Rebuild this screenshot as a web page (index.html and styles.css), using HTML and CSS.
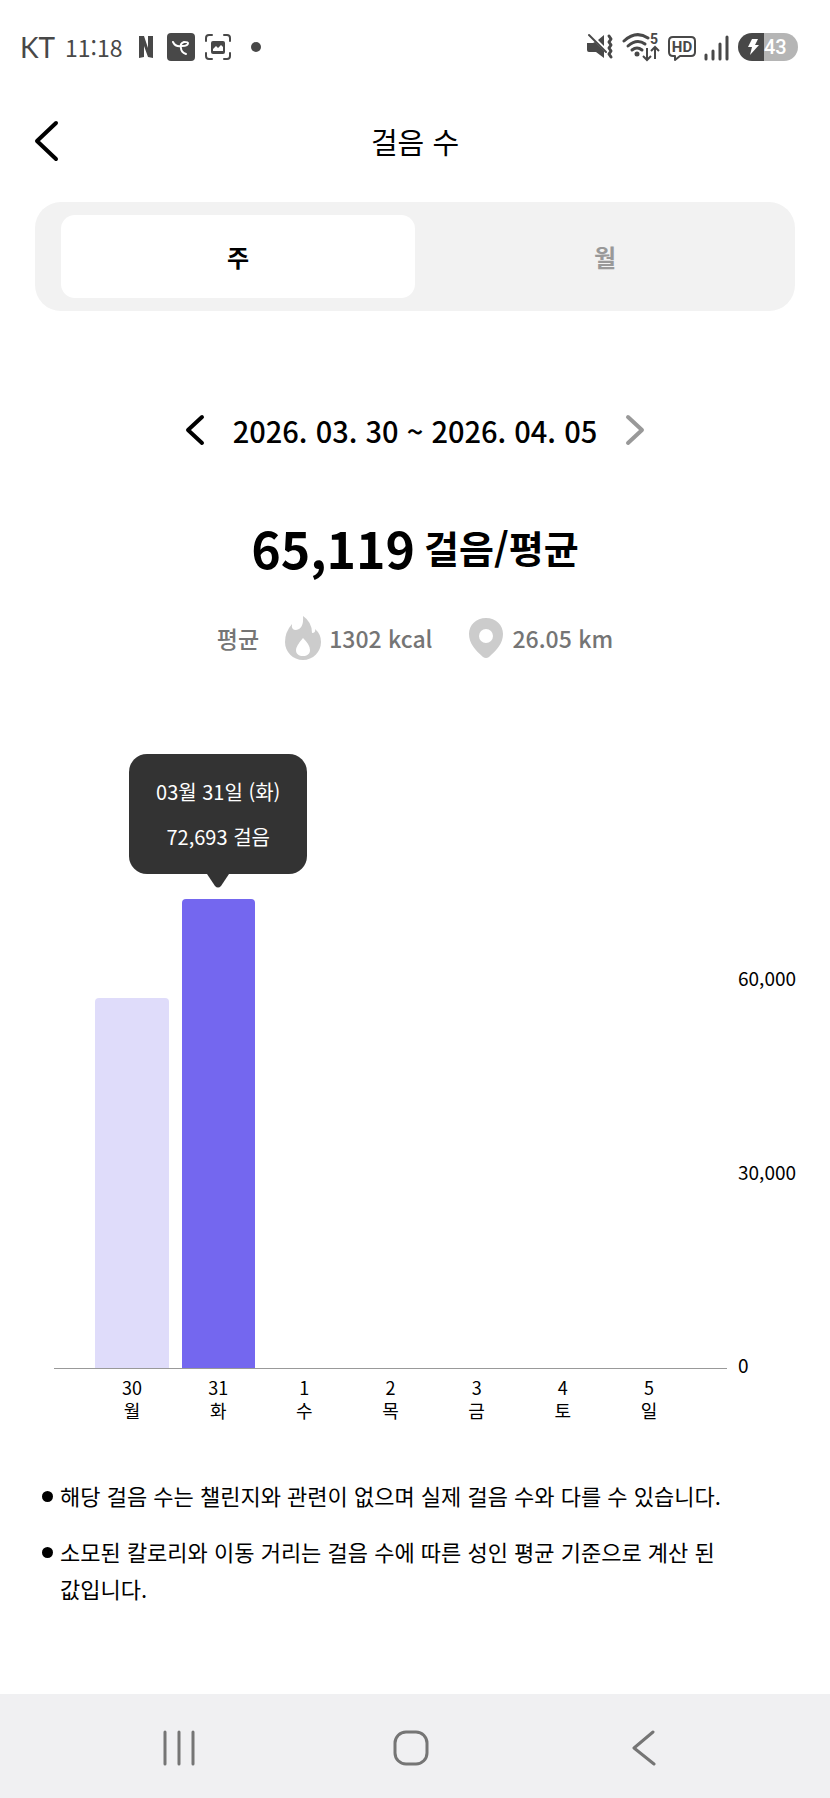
FILE: index.html
```html
<!DOCTYPE html>
<html lang="ko">
<head>
<meta charset="utf-8">
<meta name="viewport" content="width=device-width, initial-scale=1">
<title>걸음 수</title>
<link rel="stylesheet" href="styles.css">
</head>
<body>
<div class="status-bar">
  <div class="status-left">
    <span class="carrier">KT</span>
    <span class="clock">11:18</span>
    <svg class="app-n" width="14" height="24" viewBox="0 0 14 24" aria-hidden="true"><path d="M0 1h5l4 12V1h5v22l-5-1-4-11v11l-5 1z" fill="#484848"/></svg>
    <svg class="app-box" width="28" height="28" viewBox="0 0 28 28" aria-hidden="true"><rect width="28" height="28" rx="4" fill="#484848"/><path d="M6 9c2 4 5 5 9 4 4 0 6-1 6-3 0-1-2-1-4-1-3 1-4 3-3 6 0 3 2 5 5 6" fill="none" stroke="#fff" stroke-width="2" stroke-linecap="round"/></svg>
    <svg class="capture" width="28" height="28" viewBox="0 0 28 28" aria-hidden="true"><path d="M2 8V5q0-3 3-3h3M20 2h3q3 0 3 3v3M26 20v3q0 3-3 3h-3M8 26H5q-3 0-3-3v-3" fill="none" stroke="#484848" stroke-width="2" stroke-linecap="round"/><rect x="7" y="8" width="14" height="13" rx="2" fill="#484848"/><path d="M9 18v-2l3-3 2 2 3-3 2 2v4z" fill="#fff"/></svg>
    <span class="more-dot"></span>
  </div>
  <div class="status-right">
    <svg width="28" height="28" viewBox="0 0 28 28" aria-hidden="true"><path d="M1 10h6l2-1 9 9v7l-8-6H3q-2 0-2-2zM12 7l6-5v11z" fill="#484848"/><path d="M3 2l17 17" stroke="#484848" stroke-width="2" stroke-linecap="round"/><path d="M23 3l2 3-2 3 2 3-2 3 2 3-2 3 2 3" fill="none" stroke="#484848" stroke-width="3" stroke-linejoin="round" stroke-linecap="round"/></svg>
    <svg width="38" height="30" viewBox="0 0 38 30" aria-hidden="true"><g fill="none" stroke="#484848" stroke-width="3" stroke-linecap="round"><path d="M2 9Q14-2 26 6"/><path d="M6 14q9-8 17-2"/><path d="M10 18q5-4 10 0"/></g><circle cx="15" cy="22" r="2.500" fill="#484848"/><path d="M25 16v11M21 24l4 4 4-4M33 27V16M29 19l4-4 4 4" fill="none" stroke="#484848" stroke-width="2"/><text class="wifi-band" x="28" y="12">5</text></svg>
    <svg width="28" height="28" viewBox="0 0 28 28" aria-hidden="true"><path d="M5 4h18q4 0 4 4v11q0 4-4 4H12l-5 4v-4H5q-4 0-4-4V8q0-4 4-4z" fill="none" stroke="#484848" stroke-width="2" stroke-linejoin="round"/><text class="hd-mark" x="14" y="19" text-anchor="middle">HD</text></svg>
    <svg width="26" height="28" viewBox="0 0 26 28" aria-hidden="true"><path d="M2 22v4M9 18v8M16 11v15M23 4v22" stroke="#484848" stroke-width="3" stroke-linecap="round"/></svg>
    <span class="battery"><svg width="26" height="28" viewBox="0 0 26 28" aria-hidden="true"><path d="M14 6h6l-3 6h4L12 22l2-8h-4z" fill="#fff"/></svg><span class="battery-level">43</span></span>
  </div>
</div>

<header class="app-header">
  <button class="icon-button header-back" type="button" aria-label="뒤로"><svg width="26" height="42" viewBox="0 0 26 42"><path d="M22 3L3 21l19 18" fill="none" stroke="#000" stroke-width="4" stroke-linecap="round" stroke-linejoin="round"/></svg></button>
  <h1 class="title">걸음 수</h1>
</header>

<main>
  <div class="tabs" role="tablist">
    <button class="tab tab-active" type="button" role="tab" aria-selected="true">주</button>
    <button class="tab" type="button" role="tab" aria-selected="false">월</button>
  </div>

  <div class="period">
    <button class="icon-button" type="button" aria-label="이전 주"><svg width="20" height="32" viewBox="0 0 20 32"><path d="M17 3L3 16l14 13" fill="none" stroke="#000" stroke-width="4" stroke-linecap="round" stroke-linejoin="round"/></svg></button>
    <span class="period-text">2026. 03. 30 ~ 2026. 04. 05</span>
    <button class="icon-button" type="button" aria-label="다음 주"><svg width="20" height="32" viewBox="0 0 20 32"><path d="M3 3l14 13L3 29" fill="none" stroke="#999" stroke-width="4" stroke-linecap="round" stroke-linejoin="round"/></svg></button>
  </div>

  <p class="total"><span class="total-number">65,119</span><span class="total-unit">걸음/평균</span></p>

  <div class="averages">
    <span>평균</span>
    <span class="metric"><svg width="36" height="44" viewBox="0 0 36 44" aria-hidden="true"><path d="M18 0q9 6 9 17 4 0 3-4 6 5 6 13c0 10-8 18-18 18S0 36 0 26Q0 16 7 8q-1 6 4 6 8-1 7-14zM18 22q-7 8-7 12c0 4 3 6 7 6s7-2 7-6-3-8-7-12z" fill="#ccc" fill-rule="evenodd"/></svg>1302 kcal</span>
    <span class="metric metric-distance"><svg width="36" height="42" viewBox="0 0 36 42" aria-hidden="true"><path d="M18 1C8 1 1 8 1 17c0 9 6 16 14 23q3 2 6 0c8-7 14-14 14-23C35 8 28 1 18 1zm0 11a7 7 0 1 1 0 14 7 7 0 0 1 0-14z" fill="#ccc" fill-rule="evenodd"/></svg>26.05 km</span>
  </div>

  <section class="chart" aria-label="주간 걸음 수">
    <div class="plot">
      <div class="column"><div class="bar" style="height:76.4%"></div></div>
      <div class="column"><div class="bar bar-selected" style="height:96.9%">
        <div class="tooltip"><span>03월 31일 (화)</span><span>72,693 걸음</span><svg class="tooltip-arrow" width="24" height="14" viewBox="0 0 24 14" aria-hidden="true"><path d="M1 0h22l-8 12q-3 3-6 0z" fill="#333"/></svg></div>
      </div></div>
      <div class="column"></div>
      <div class="column"></div>
      <div class="column"></div>
      <div class="column"></div>
      <div class="column"></div>
    </div>
    <div class="y-axis"><span>60,000</span><span>30,000</span><span>0</span></div>
    <div class="x-axis">
      <span>30<br>월</span><span>31<br>화</span><span>1<br>수</span><span>2<br>목</span><span>3<br>금</span><span>4<br>토</span><span>5<br>일</span>
    </div>
  </section>

  <ul class="notes">
    <li>해당 걸음 수는 챌린지와 관련이 없으며 실제 걸음 수와 다를 수 있습니다.</li>
    <li>소모된 칼로리와 이동 거리는 걸음 수에 따른 성인 평균 기준으로 계산 된 값입니다.</li>
  </ul>
</main>

<nav class="system-nav">
  <button class="icon-button" type="button" aria-label="최근 앱"><svg width="36" height="36" viewBox="0 0 36 36"><path d="M4 2v32M18 2v32M32 2v32" stroke="#757575" stroke-width="3" stroke-linecap="round"/></svg></button>
  <button class="icon-button" type="button" aria-label="홈"><svg width="36" height="36" viewBox="0 0 36 36"><rect x="2" y="2" width="32" height="32" rx="11" fill="none" stroke="#757575" stroke-width="3"/></svg></button>
  <button class="icon-button" type="button" aria-label="뒤로 가기"><svg width="36" height="36" viewBox="0 0 36 36"><path d="M27 2L8 18l20 16" fill="none" stroke="#757575" stroke-width="3" stroke-linecap="round" stroke-linejoin="round"/></svg></button>
</nav>
</body>
</html>
```

FILE: styles.css
```css
* {
  box-sizing: border-box;
}

body {
  margin: 0;
  min-height: 100vh;
  display: flex;
  flex-direction: column;
  background: #fff;
  color: #000;
  font-family: "Noto Sans CJK KR", sans-serif;
  word-break: keep-all;
}

main {
  flex: 1;
}

svg {
  display: block;
  flex: none;
}

.icon-button {
  display: flex;
  align-items: center;
  justify-content: center;
  padding: 0;
  border: 0;
  background: none;
}

/* Status bar */
.status-bar {
  display: flex;
  justify-content: space-between;
  align-items: center;
  height: 94px;
  padding: 0 32px 0 20px;
  color: #484848;
}

.status-left,
.status-right {
  display: flex;
  align-items: center;
}

.status-right {
  gap: 8px;
}

.carrier {
  font: 28px/32px Lato, sans-serif;
}

.clock {
  margin-left: 10px;
  font: 23px/32px "Noto Sans CJK KR", sans-serif;
}

.app-n {
  margin-left: 16px;
}

.app-box {
  margin-left: 14px;
}

.capture {
  margin-left: 9px;
}

.more-dot {
  width: 10px;
  height: 10px;
  margin-left: 19px;
  border-radius: 50%;
  background: #484848;
}

.wifi-band {
  font: bold 14px Roboto, sans-serif;
  fill: #484848;
}

.hd-mark {
  font: bold 15px Roboto, sans-serif;
  fill: #484848;
}

.battery {
  display: flex;
  align-items: center;
  width: 60px;
  height: 28px;
  border-radius: 14px;
  overflow: hidden;
  background: linear-gradient(90deg, #484848 26px, #b5b5b5 26px);
}

.battery-level {
  color: #fff;
  font: 500 20px/28px Roboto, sans-serif;
}

/* Header */
.app-header {
  display: grid;
  grid-template-columns: 26px 1fr 26px;
  align-items: center;
  height: 94px;
  margin: 0 34px;
}

.title {
  margin: 0;
  text-align: center;
  font-size: 29px;
  font-weight: 400;
  line-height: 40px;
}

/* Week / month switch */
.tabs {
  display: grid;
  grid-template-columns: 1fr 1fr;
  height: 109px;
  margin: 14px 35px 0;
  padding: 13px 0;
  border-radius: 26px;
  background: #f2f2f2;
}

.tab {
  border: 0;
  border-radius: 14px;
  background: none;
  color: #999;
  font: bold 24px/36px "Noto Sans CJK KR", sans-serif;
}

.tab-active {
  margin-left: 26px;
  background: #fff;
  color: #000;
}

/* Summary */
.period {
  display: flex;
  justify-content: center;
  align-items: center;
  gap: 28px;
  margin-top: 98px;
}

.period-text {
  font-size: 29px;
  font-weight: 500;
  line-height: 42px;
}

.total {
  display: flex;
  justify-content: center;
  align-items: center;
  gap: 9px;
  margin: 56px 0 0;
  font-weight: bold;
  line-height: 80px;
}

.total-number {
  font-size: 50px;
}

.total-unit {
  font-size: 38px;
}

.averages {
  display: flex;
  justify-content: center;
  align-items: center;
  margin-top: 29px;
  color: #757575;
  font-size: 23px;
  font-weight: 500;
  line-height: 44px;
}

.metric {
  display: flex;
  align-items: center;
  gap: 8px;
  margin-left: 26px;
}

.metric-distance {
  margin-left: 36px;
}

/* Chart */
.chart {
  display: grid;
  grid-template-columns: 1fr 60px;
  column-gap: 11px;
  margin: 224px 32px 0 54px;
  font-size: 18px;
}

.plot,
.x-axis {
  display: grid;
  grid-template-columns: repeat(7, 1fr);
  padding: 0 35px;
}

.plot {
  height: 485px;
  border-bottom: 1px solid #999;
}

.column {
  display: flex;
  justify-content: center;
  align-items: flex-end;
}

.bar {
  width: 85%;
  border-radius: 4px 4px 0 0;
  background: #dfdcfa;
}

.bar-selected {
  position: relative;
  background: #7467ef;
}

.tooltip {
  position: absolute;
  left: 50%;
  bottom: 100%;
  display: flex;
  flex-direction: column;
  align-items: center;
  justify-content: center;
  gap: 17px;
  width: 178px;
  height: 120px;
  margin: 0 0 25px -89px;
  border-radius: 18px;
  background: #333;
  color: #fff;
  font-size: 20px;
  line-height: 28px;
  white-space: nowrap;
}

.tooltip-arrow {
  position: absolute;
  top: 100%;
  left: 50%;
  margin-left: -12px;
}

.y-axis {
  display: flex;
  flex-direction: column;
  justify-content: space-between;
  align-self: end;
  height: 411px;
  margin-bottom: -8px;
  font-size: 19px;
  line-height: 24px;
}

.x-axis {
  padding-top: 7px;
  text-align: center;
  line-height: 23px;
}

/* Notes */
.notes {
  margin: 55px 60px 40px 42px;
  padding: 0;
  list-style: none;
  font-size: 22px;
  line-height: 37px;
}

.notes li {
  display: flex;
  gap: 7px;
  margin-bottom: 19px;
}

.notes li::before {
  content: "";
  flex: none;
  width: 11px;
  height: 11px;
  margin-top: 14px;
  border-radius: 50%;
  background: #000;
}

/* System navigation */
.system-nav {
  display: grid;
  grid-template-columns: repeat(3, 1fr);
  height: 104px;
  padding: 4px 70px 0 63px;
  background: #f0f0f2;
}
```
